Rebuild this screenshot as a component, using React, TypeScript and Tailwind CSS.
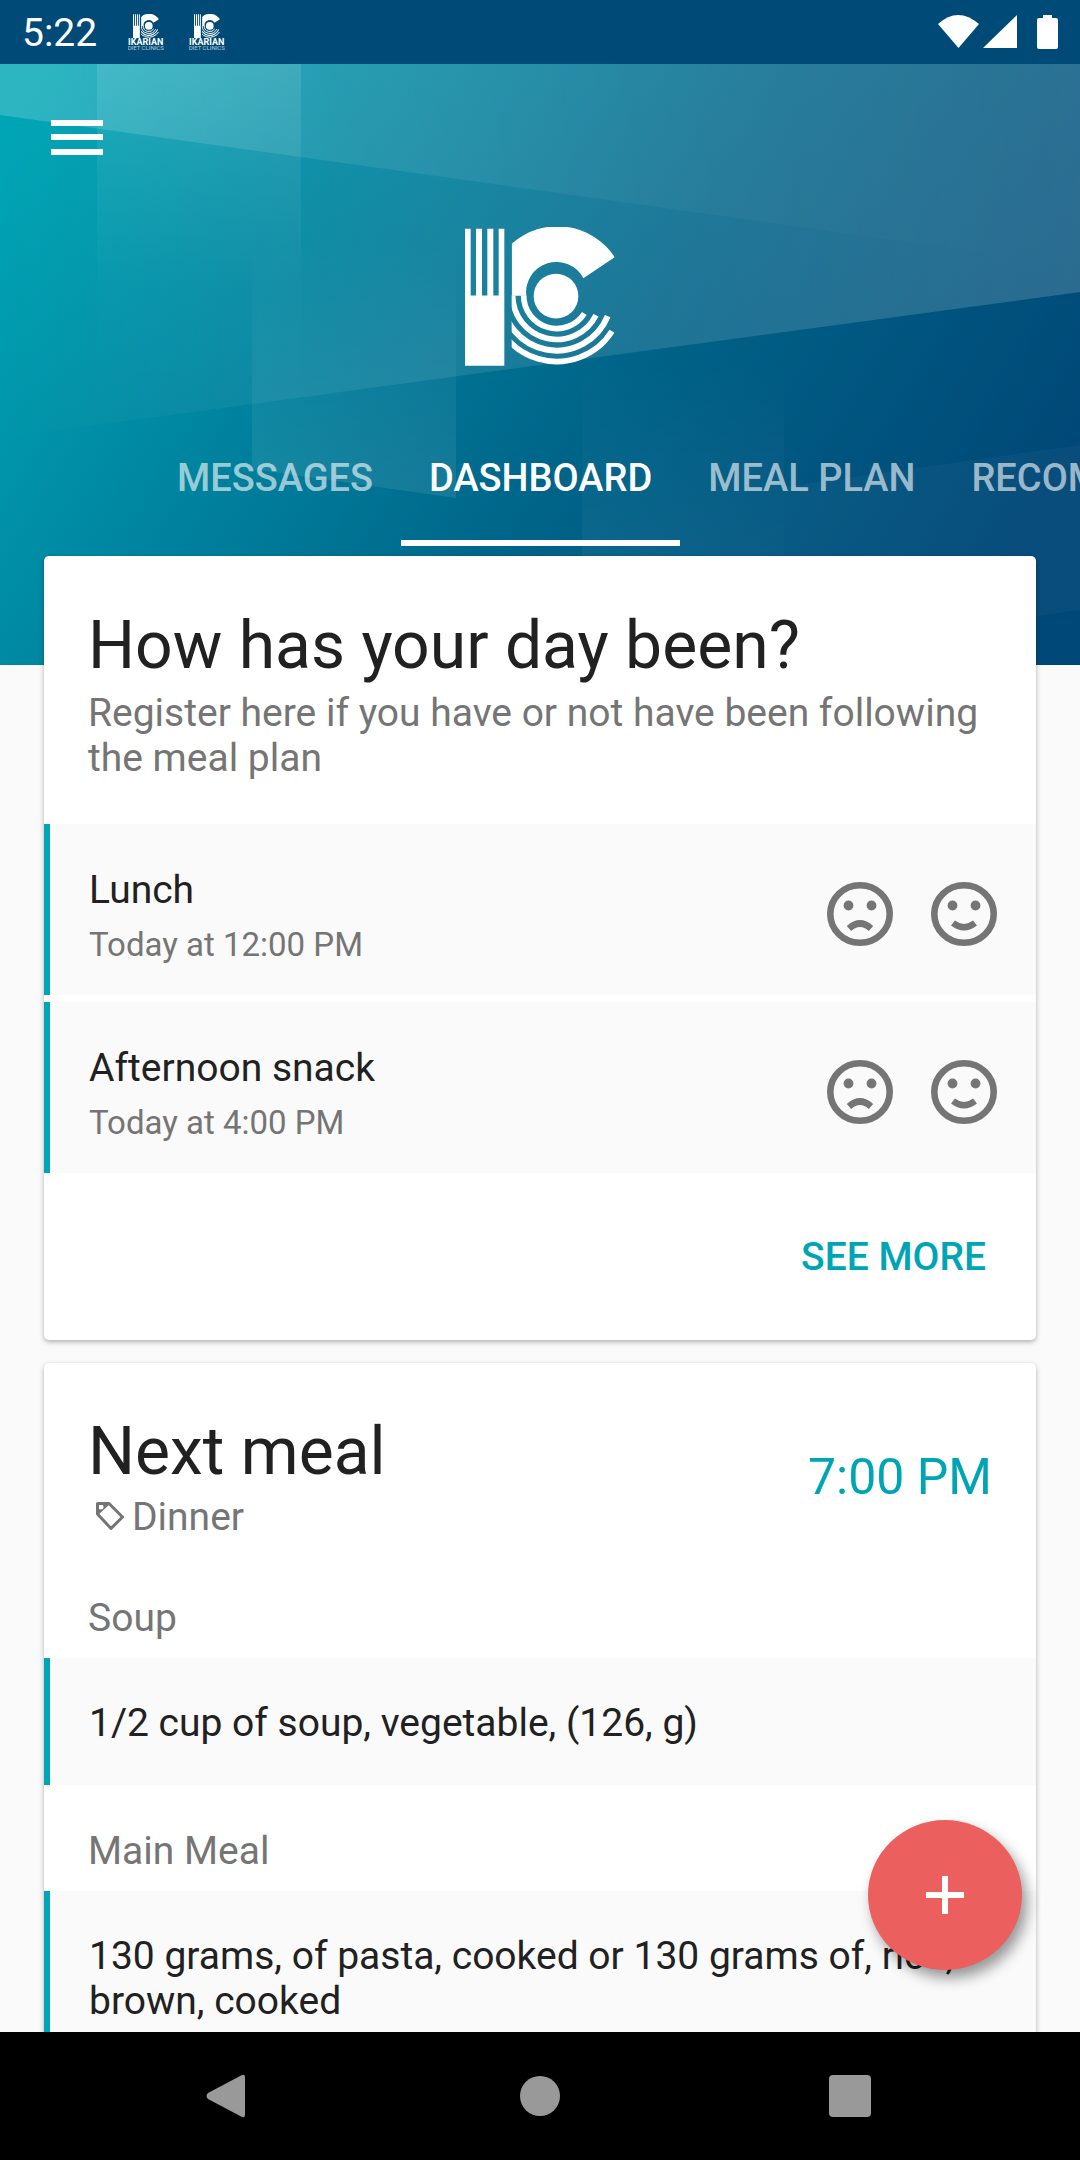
import { useId, useState } from 'react'

type Mood = 'sad' | 'happy'

const tabs = ['MESSAGES', 'DASHBOARD', 'MEAL PLAN', 'RECOMMENDATIONS']

const pendingMeals = [
  { name: 'Lunch', time: 'Today at 12:00 PM' },
  { name: 'Afternoon snack', time: 'Today at 4:00 PM' },
]

const nextMeal = {
  name: 'Dinner',
  time: '7:00 PM',
  courses: [
    { title: 'Soup', text: '1/2 cup of soup, vegetable, (126, g)' },
    { title: 'Main Meal', text: '130 grams, of pasta, cooked or 130 grams of, rice, brown, cooked' },
  ],
}

function Logo({ className }: { className: string }) {
  const clip = useId()
  return (
    <svg viewBox="73 51 450 416" className={className} aria-hidden="true">
      <clipPath id={clip}>
        <rect x="213" y="40" width="320" height="440" />
      </clipPath>
      <path
        fill="currentColor"
        d="M73 56h17v200h16V56h18v200h16V56h18v200h16V56h17v411H73Z"
      />
      <g clipPath={`url(#${clip})`}>
        <path fill="currentColor" d="M213 101A205 205 0 0 1 522 141L428 204A91 91 0 0 0 257 257H213Z" />
        <g fill="none" stroke="currentColor">
          <path strokeWidth="17" d="M249 256A99 99 0 0 0 431 310" />
          <path strokeWidth="17" d="M216 256A132 132 0 0 0 466 315" />
          <path strokeWidth="18" d="M183 256A165 165 0 0 0 501 318" />
          <path strokeWidth="17" d="M151 256A197 197 0 0 0 514 363" />
        </g>
      </g>
      <circle cx="346" cy="258" r="67" fill="currentColor" />
    </svg>
  )
}

function NotificationLogo() {
  return (
    <div className="flex w-[37px] flex-col items-center text-white">
      <Logo className="h-[24px] w-[26px]" />
      <span className="text-[9px] font-bold leading-[8px]">IKARIAN</span>
      <span className="whitespace-nowrap text-[6px] leading-[4px] opacity-70">DIET CLINICS</span>
    </div>
  )
}

function StatusBar() {
  return (
    <div className="flex h-16 shrink-0 items-center justify-between bg-[#004a77] pl-[22px] pr-[22px] text-white">
      <div className="flex items-center">
        <span className="pt-[2px] text-[39px] leading-[44px]">5:22</span>
        <div className="ml-[30px] flex gap-6">
          <NotificationLogo />
          <NotificationLogo />
        </div>
      </div>
      <svg viewBox="0 0 120 34" className="h-[34px] w-[120px]" fill="currentColor" aria-hidden="true">
        <path d="M0 9Q20-9 41 9L20.500 33Z" />
        <path d="M79 0V33H45Z" />
        <path d="M105 0h9v3h4a2 2 0 0 1 2 2v27a2 2 0 0 1-2 2h-17a2 2 0 0 1-2-2V5a2 2 0 0 1 2-2h4Z" />
      </svg>
    </div>
  )
}

function HeaderBackground() {
  return (
    <svg
      viewBox="0 64 1080 601"
      preserveAspectRatio="none"
      className="absolute inset-0 h-full w-full"
      aria-hidden="true"
    >
      <defs>
        <linearGradient id="base" gradientUnits="userSpaceOnUse" x1="0" y1="150" x2="918" y2="701">
          <stop offset="0" stopColor="#00a5b5" />
          <stop offset="0.3" stopColor="#00849f" />
          <stop offset="0.6" stopColor="#006489" />
          <stop offset="1" stopColor="#004877" />
        </linearGradient>
        <linearGradient id="top" gradientUnits="userSpaceOnUse" x1="0" y1="64" x2="1080" y2="64">
          <stop offset="0" stopColor="#fff" stopOpacity="0.18" />
          <stop offset="0.3" stopColor="#fff" stopOpacity="0.09" />
          <stop offset="0.6" stopColor="#fff" stopOpacity="0.04" />
          <stop offset="0.95" stopColor="#fff" stopOpacity="0" />
        </linearGradient>
        <linearGradient id="middle" gradientUnits="userSpaceOnUse" x1="0" y1="64" x2="1080" y2="64">
          <stop offset="0" stopColor="#fff" stopOpacity="0" />
          <stop offset="0.4" stopColor="#fff" stopOpacity="0.09" />
          <stop offset="1" stopColor="#fff" stopOpacity="0.17" />
        </linearGradient>
        <linearGradient id="bandDown" x1="0" y1="0" x2="0" y2="1">
          <stop offset="0" stopColor="#fff" stopOpacity="0.11" />
          <stop offset="0.3" stopColor="#fff" stopOpacity="0.06" />
          <stop offset="0.6" stopColor="#fff" stopOpacity="0.01" />
          <stop offset="1" stopColor="#fff" stopOpacity="0" />
        </linearGradient>
        <linearGradient id="bandUp" x1="0" y1="0" x2="0" y2="1">
          <stop offset="0" stopColor="#fff" stopOpacity="0" />
          <stop offset="1" stopColor="#fff" stopOpacity="0.09" />
        </linearGradient>
      </defs>
      <path fill="url(#base)" d="M0 64H1080V665H0Z" />
      <path fill="url(#middle)" d="M0 64H1080V292L0 438Z" />
      <path fill="url(#top)" d="M0 64H1080V266L0 115Z" />
      <path fill="url(#bandDown)" d="M97 64H301V410L97 440Z" />
      <path fill="url(#bandUp)" d="M252 240H456V498L252 469Z" />
      <path fill="url(#bandUp)" fillOpacity="0.8" d="M582 360H784V665H582Z" />
      <path fill="#fff" fillOpacity="0.03" d="M784 487L1080 445V610L784 650Z" />
    </svg>
  )
}

function MoodButton({ mood, label }: { mood: Mood; label: string }) {
  return (
    <button type="button" aria-label={label} className="text-[#757575]">
      <svg viewBox="0 0 66 64" className="h-16 w-[66px]" fill="none" stroke="currentColor" aria-hidden="true">
        <ellipse cx="33" cy="32" rx="29.700" ry="28.700" strokeWidth="6.600" />
        <circle cx="21.500" cy="23.500" r="4.900" fill="currentColor" stroke="none" />
        <circle cx="44.500" cy="23.500" r="4.900" fill="currentColor" stroke="none" />
        {mood === 'sad' ? (
          <path strokeWidth="6.500" d="M22 46.500Q33 36.500 44 46.500" />
        ) : (
          <path strokeWidth="6.500" d="M22 41Q33 49.500 44 41" />
        )}
      </svg>
    </button>
  )
}

function Course({ title, text }: { title: string; text: string }) {
  return (
    <section>
      <h3 className="px-11 text-[39px] leading-[45px] text-[#757575]">{title}</h3>
      <p className="mt-[17px] border-l-[6px] border-[#00a5b5] bg-[#fafafa] pb-[39px] pl-[39px] pr-11 pt-[43px] text-[39px] leading-[45px]">
        {text}
      </p>
    </section>
  )
}

export default function App() {
  const [activeTab, setActiveTab] = useState('DASHBOARD')

  return (
    <div className="flex h-screen flex-col overflow-hidden bg-[#fafafa] font-[Roboto,'Liberation_Sans',sans-serif] text-[#212121]">
      <StatusBar />

      <div className="relative min-h-0 flex-1">
        <div className="h-full overflow-hidden">
          <header className="relative overflow-hidden pb-[119px] text-white">
            <HeaderBackground />
            <div className="relative">
              <div className="flex pl-[51px] pt-[56px]">
                <button type="button" aria-label="Open menu">
                  <svg viewBox="0 0 52 35" className="h-[35px] w-[52px]" fill="currentColor" aria-hidden="true">
                    <path d="M0 0h52v6H0zM0 14h52v6H0zM0 29h52v6H0z" />
                  </svg>
                </button>
              </div>
              <Logo className="mx-auto mt-[72px] h-[139px] w-[150px]" />
              <nav className="mt-[66px] flex pl-[149px]">
                {tabs.map((tab) => (
                  <button
                    key={tab}
                    type="button"
                    onClick={() => setActiveTab(tab)}
                    className={`shrink-0 border-b-[6px] px-7 pb-[39px] pt-6 text-[38px] font-medium leading-[45px] ${
                      tab === activeTab ? 'border-white text-white' : 'border-transparent text-white/60'
                    }`}
                  >
                    {tab}
                  </button>
                ))}
              </nav>
            </div>
          </header>

          <main className="relative -mt-[109px] flex flex-col gap-[23px] px-11">
            <section className="rounded-[5px] bg-white shadow-[0_2px_5px_rgba(0,0,0,0.3)]">
              <div className="px-11 pb-[43px] pt-[51px]">
                <h2 className="text-[66px] leading-[78px]">How has your day been?</h2>
                <p className="mt-[6px] text-[39px] leading-[45px] text-[#757575]">
                  Register here if you have or not have been following the meal plan
                </p>
              </div>
              <ul className="flex flex-col gap-[7px]">
                {pendingMeals.map((meal) => (
                  <li
                    key={meal.name}
                    className="flex items-start justify-between border-l-[6px] border-[#00a5b5] bg-[#fafafa] pb-[31px] pl-[39px] pr-[39px] pt-11"
                  >
                    <div>
                      <p className="text-[39px] leading-[45px]">{meal.name}</p>
                      <p className="mt-3 text-[33px] leading-[39px] text-[#757575]">{meal.time}</p>
                    </div>
                    <div className="flex gap-[38px] pt-[14px]">
                      <MoodButton mood="sad" label={`${meal.name}: not followed`} />
                      <MoodButton mood="happy" label={`${meal.name}: followed`} />
                    </div>
                  </li>
                ))}
              </ul>
              <div className="flex justify-end pb-[60px] pr-[50px] pt-[62px]">
                <button type="button" className="text-[39px] font-medium leading-[45px] text-[#00a5b5]">
                  SEE MORE
                </button>
              </div>
            </section>

            <section className="rounded-[5px] bg-white shadow-[0_2px_5px_rgba(0,0,0,0.3)]">
              <div className="flex items-center justify-between px-11 pt-[50px]">
                <div>
                  <h2 className="text-[66px] leading-[78px]">Next meal</h2>
                  <p className="mt-1 flex items-center gap-2 pl-2 text-[39px] leading-[45px] text-[#757575]">
                    <svg viewBox="0 0 28 28" className="mb-1 h-7 w-7" aria-hidden="true">
                      <path
                        fill="none"
                        stroke="currentColor"
                        strokeWidth="3"
                        strokeLinejoin="round"
                        d="M1.500 1.500H13L26.500 15L15 26.500L1.500 12Z"
                      />
                      <path
                        fill="currentColor"
                        fillRule="evenodd"
                        d="M1 1H15L1 14ZM5 2.500a2.500 2.500 0 1 0 0 5a2.500 2.500 0 1 0 0-5Z"
                      />
                    </svg>
                    {nextMeal.name}
                  </p>
                </div>
                <p className="text-[50px] leading-[58px] text-[#00a5b5]">{nextMeal.time}</p>
              </div>
              <div className="mt-14 flex flex-col gap-11">
                {nextMeal.courses.map((course) => (
                  <Course key={course.title} title={course.title} text={course.text} />
                ))}
              </div>
            </section>
          </main>
        </div>

        <button
          type="button"
          aria-label="Add"
          className="absolute bottom-[62px] right-[58px] flex h-[150px] w-[154px] items-center justify-center rounded-[50%] bg-[#eb5f5f] text-white shadow-[5px_8px_14px_rgba(0,0,0,0.4)]"
        >
          <svg viewBox="0 0 38 38" className="h-[38px] w-[38px]" fill="currentColor" aria-hidden="true">
            <path d="M16 0h6v16h16v6H22v16h-6V22H0v-6h16z" />
          </svg>
        </button>
      </div>

      <nav className="flex h-32 shrink-0 items-center justify-between bg-black pl-[206px] pr-[209px] text-[#999]">
        <button type="button" aria-label="Back" className="w-[45px]">
          <svg viewBox="0 0 39 44" className="h-11 w-[39px]" fill="currentColor" aria-hidden="true">
            <path d="M36 1Q39 0 39 3V41Q39 44 36 43L2 25Q-1 22 2 19Z" />
          </svg>
        </button>
        <button type="button" aria-label="Home" className="h-10 w-10 rounded-full bg-[#999]" />
        <button type="button" aria-label="Recent apps" className="h-[42px] w-[42px] rounded-[4px] bg-[#999]" />
      </nav>
    </div>
  )
}
